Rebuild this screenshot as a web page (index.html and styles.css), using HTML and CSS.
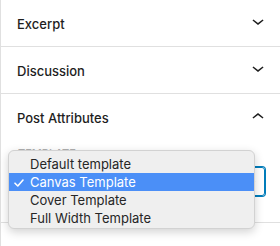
FILE: index.html
```html
<!DOCTYPE html>
<html>
<head>
<meta charset="utf-8">
<link rel="stylesheet" href="styles.css">
</head>
<body>
<div class="sidebar">
  <div class="panel">
    <div class="panel-header">
      <span class="panel-title">Excerpt</span>
      <svg class="chev chev-down" viewBox="0 0 24 24" width="24" height="24"><path d="M17.5 11.6L12 16l-5.5-4.4.9-1.2L12 14l4.6-3.6 1 1.2z"/></svg>
    </div>
  </div>
  <div class="panel">
    <div class="panel-header">
      <span class="panel-title">Discussion</span>
      <svg class="chev chev-down" viewBox="0 0 24 24" width="24" height="24"><path d="M17.5 11.6L12 16l-5.5-4.4.9-1.2L12 14l4.6-3.6 1 1.2z"/></svg>
    </div>
  </div>
  <div class="panel">
    <div class="panel-header">
      <span class="panel-title">Post Attributes</span>
      <svg class="chev" viewBox="0 0 24 24" width="24" height="24"><path d="M6.5 12.4L12 8l5.5 4.4-.9 1.2L12 10l-4.6 3.6-1-1.2z"/></svg>
    </div>
    <div class="panel-body">
      <div class="field-label">Template</div>
      <div class="select">
        <svg class="select-arrow" viewBox="0 0 24 24" width="18" height="18"><path d="M17.5 11.6L12 16l-5.5-4.4.9-1.2L12 14l4.6-3.6 1 1.2z"/></svg>
      </div>
    </div>
  </div>
  <div class="menu">
    <div class="menu-item">Default template</div>
    <div class="menu-item selected"><svg class="check" viewBox="0 0 10 8" width="10" height="8"><path d="M1 4.2l2.8 2.8L9 1" fill="none" stroke="#fff" stroke-width="1.6" stroke-linecap="round" stroke-linejoin="round"/></svg>Canvas Template</div>
    <div class="menu-item">Cover Template</div>
    <div class="menu-item">Full Width Template</div>
  </div>
</div>
</body>
</html>
```
FILE: styles.css
```css
html, body {
  margin: 0;
  padding: 0;
  background: #ffffff;
}
body {
  font-family: Inter, "Noto Sans", sans-serif;
  color: #1e1e1e;
  width: 280px;
  height: 246px;
  overflow: hidden;
}
.sidebar {
  position: relative;
  border-left: 1px solid #e0e0e0;
  height: 246px;
  box-sizing: border-box;
}
.panel {
  border-bottom: 1px solid #e0e0e0;
}
.panel-header {
  height: 46px;
  display: flex;
  align-items: center;
  justify-content: space-between;
  padding: 0 10px 0 16px;
}
.panel-title {
  font-size: 13px;
  font-weight: 500;
  line-height: 16px;
  padding-top: 1px;
  color: #1e1e1e;
}
.chev {
  fill: #1e1e1e;
  display: block;
}
.chev-down {
  margin-top: -4px;
}
.panel-body {
  padding: 6px 15px 26px 16px;
}
.field-label {
  font-size: 11px;
  line-height: 15px;
  color: #b0b0b0;
  text-transform: uppercase;
  font-weight: 500;
  padding-left: 1px;
}
.select {
  margin-top: 6px;
  height: 29px;
  box-sizing: border-box;
  border: 1px solid #007cba;
  box-shadow: 0 0 0 1px #007cba;
  border-radius: 3px;
  display: flex;
  align-items: center;
  justify-content: flex-end;
  padding: 0 4px 0 8px;
}
.select-arrow {
  fill: #1e1e1e;
  display: block;
}
.menu {
  position: absolute;
  left: 7px;
  top: 150px;
  width: 247px;
  height: 79px;
  box-sizing: border-box;
  padding-top: 4px;
  background: #efefef;
  border: 1px solid #d2d2d2;
  border-radius: 6px;
  box-shadow: 0 3px 10px rgba(0, 0, 0, 0.18);
  font-family: Inter, "Noto Sans", sans-serif;
  font-size: 13px;
  color: #262626;
}
.menu-item {
  position: relative;
  height: 18px;
  line-height: 18px;
  padding-left: 21px;
}
.menu-item.selected {
  background: #4b8ff7;
  color: #ffffff;
}
.check {
  position: absolute;
  left: 5px;
  top: 6px;
  display: block;
}
```
